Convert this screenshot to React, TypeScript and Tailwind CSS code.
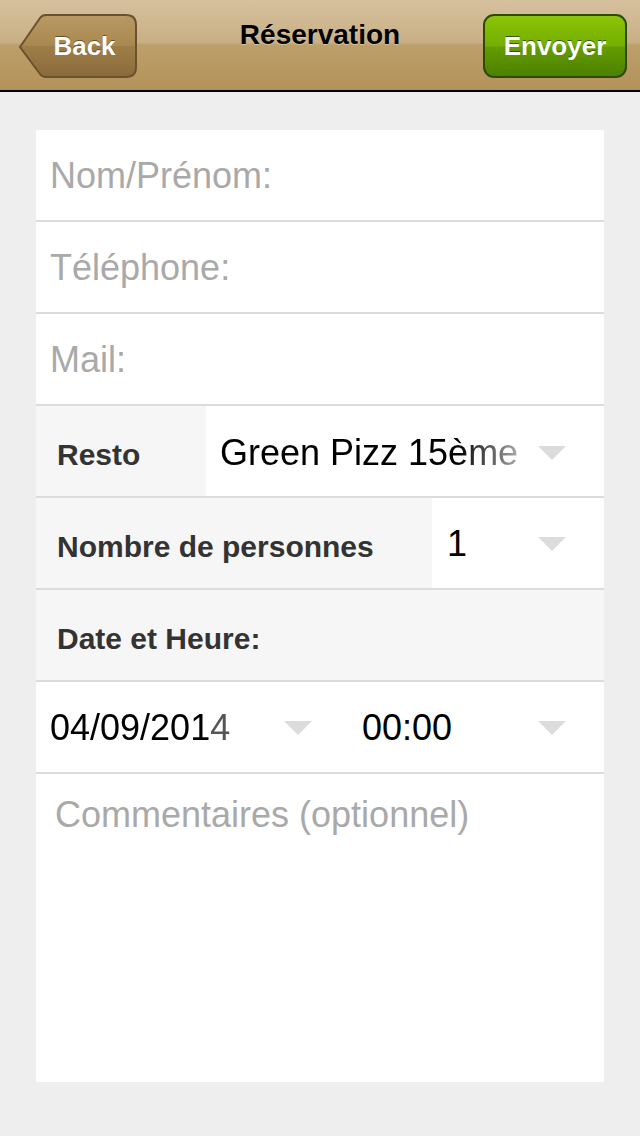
import React from "react";

const font = "font-['Liberation_Sans','Helvetica','Arial',sans-serif]";

function Arrow() {
  return (
    <svg width="28" height="14" viewBox="0 0 28 14" className="shrink-0">
      <path d="M0 0 H28 L14 14 Z" fill="#dcdcdc" />
    </svg>
  );
}

function BackButton() {
  return (
    <button className="relative ml-[5px] h-[64px] w-[120px] shrink-0">
      <svg width="120" height="64" viewBox="0 0 120 64" className="absolute inset-0">
        <defs>
          <linearGradient id="backg" x1="0" y1="0" x2="0" y2="1">
            <stop offset="0" stopColor="#ba9a64" />
            <stop offset="0.5" stopColor="#a8884f" />
            <stop offset="0.5" stopColor="#9e7e47" />
            <stop offset="1" stopColor="#8a6a3a" />
          </linearGradient>
        </defs>
        <path
          d="M2 33 L22 4 Q24 1 28 1 H108 Q118 1 118 11 V53 Q118 63 108 63 H28 Q24 63 22 60 Z"
          fill="url(#backg)"
          stroke="#6a5230"
          strokeWidth="2"
        />
      </svg>
      <span className="relative block pl-[13px] text-[26px] font-bold leading-[64px] text-white [text-shadow:0_-1px_0_rgba(60,40,10,0.6)]">
        Back
      </span>
    </button>
  );
}

function SendButton() {
  return (
    <button className="h-[64px] w-[144px] shrink-0 rounded-[11px] border-2 border-[#2e4a0a] bg-[linear-gradient(to_bottom,#8cc408_0%,#74ae00_50%,#649c00_52%,#4c8000_100%)] text-[26px] font-bold leading-[60px] text-white [text-shadow:0_-1px_0_rgba(20,50,0,0.7)]">
      Envoyer
    </button>
  );
}

function InputRow({ placeholder }: { placeholder: string }) {
  return (
    <div className="flex h-[92px] items-center border-b-2 border-[#dcdcdc] bg-white pl-[14px] pt-[2px] text-[36px] text-[#a9a9a9]">
      {placeholder}
    </div>
  );
}

export default function App() {
  return (
    <div className={`${font} flex min-h-[1136px] w-[640px] flex-col bg-[#eeeeee]`}>
      <header className="grid h-[92px] grid-cols-[1fr_auto_1fr] items-start border-b-2 border-black bg-[linear-gradient(to_bottom,#d6c09e_0%,#c9af84_47%,#bd9f6a_50%,#b29259_100%)] px-[13px] pt-[14px]">
        <div className="flex justify-start">
          <BackButton />
        </div>
        <h1 className="mt-[4px] text-[28px] font-bold leading-[34px] text-black [text-shadow:0_1px_0_rgba(255,255,255,0.35)]">
          Réservation
        </h1>
        <div className="flex justify-end">
          <SendButton />
        </div>
      </header>

      <main className="mx-[36px] mt-[38px] mb-[54px] flex w-[568px] flex-col bg-white">
        <InputRow placeholder="Nom/Prénom:" />
        <InputRow placeholder="Téléphone:" />
        <InputRow placeholder="Mail:" />

        <div className="flex h-[92px] border-b-2 border-[#dcdcdc]">
          <div className="flex w-[170px] items-center bg-[#f6f6f6] pl-[21px] pt-[7px] text-[30px] font-bold text-[#333333]">
            Resto
          </div>
          <div className="flex flex-1 items-center bg-white pl-[14px] pr-[38px] pt-[3px]">
            <span className="inline-block whitespace-nowrap bg-[linear-gradient(to_right,#000_0%,#000_80%,#aaa_100%)] bg-clip-text text-[36px] text-transparent">
              Green Pizz 15ème
            </span>
            <div className="ml-auto">
              <Arrow />
            </div>
          </div>
        </div>

        <div className="flex h-[92px] border-b-2 border-[#dcdcdc]">
          <div className="flex w-[396px] items-center bg-[#f6f6f6] pl-[21px] pt-[7px] text-[30px] font-bold text-[#333333]">
            Nombre de personnes
          </div>
          <div className="flex flex-1 items-center bg-white pl-[15px] pr-[38px] pt-[2px] text-[36px] text-black">
            <span>1</span>
            <div className="ml-auto">
              <Arrow />
            </div>
          </div>
        </div>

        <div className="flex h-[92px] items-center border-b-2 border-[#dcdcdc] bg-[#f6f6f6] pl-[21px] pt-[7px] text-[30px] font-bold text-[#333333]">
          Date et Heure:
        </div>

        <div className="flex h-[92px] border-b-2 border-[#dcdcdc] bg-white">
          <div className="flex w-[290px] items-center pl-[14px] pr-[14px] pt-[2px]">
            <span className="inline-block whitespace-nowrap bg-[linear-gradient(to_right,#000_0%,#000_89%,#555_90%,#555_100%)] bg-clip-text text-[36px] text-transparent">
              04/09/2014
            </span>
            <div className="ml-auto">
              <Arrow />
            </div>
          </div>
          <div className="flex flex-1 items-center pl-[36px] pr-[38px] pt-[2px] text-[36px] text-black">
            <span>00:00</span>
            <div className="ml-auto">
              <Arrow />
            </div>
          </div>
        </div>

        <div className="h-[308px] bg-white pl-[19px] pt-[21px] text-[36px] leading-[40px] text-[#a9a9a9]">
          Commentaires (optionnel)
        </div>
      </main>
    </div>
  );
}
